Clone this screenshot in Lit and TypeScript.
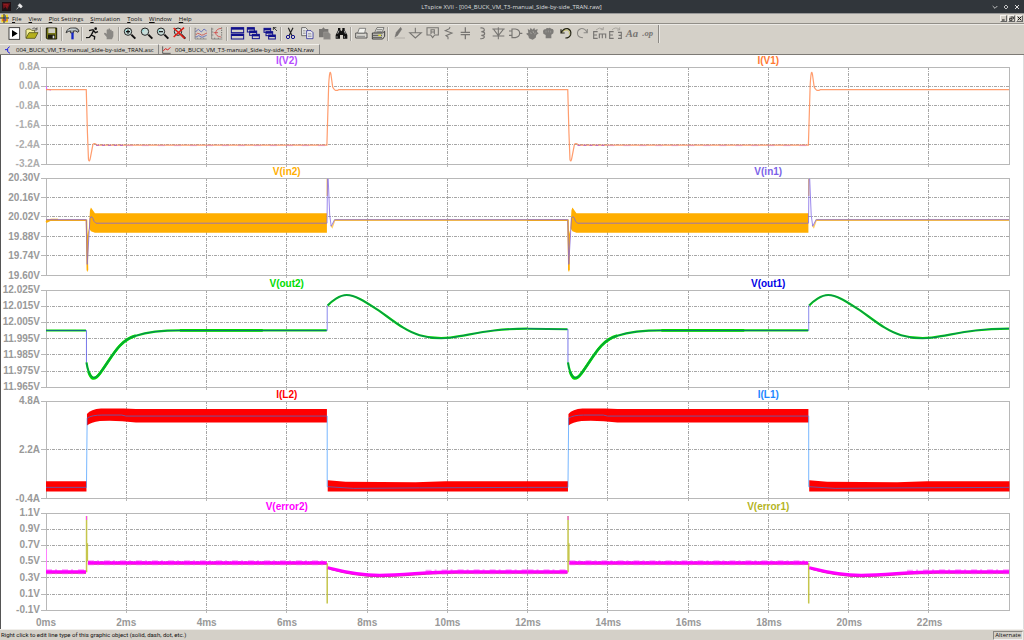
import { LitElement, html, svg, css } from "lit";
import { customElement, property } from "lit/decorators.js";

/* ---------- toolbar icons, drawn on a 45 x 45 grid ---------- */

const magnifier = (inner: unknown) => svg`
  <path d="M28 26 L40 38" stroke="#111" stroke-width="6"/>
  <circle cx="18" cy="17" r="11" fill="#c8dcd8" stroke="#222" stroke-width="3"/>
  <path d="M11 17a7 7 0 0 1 5-6" stroke="#7fe0e0" stroke-width="3" fill="none"/>
  ${inner}`;

const windowBox = (x: number, y: number, w: number, h: number) => svg`
  <rect x=${x} y=${y} width=${w} height=${h} fill="#d4d0c8" stroke="#10108c" stroke-width="3"/>
  <rect x=${x} y=${y} width=${w} height="6" fill="#10108c"/>`;

const handShape = svg`
  <path d="M14 40V33L6 24q0-5 5-3l3 3V12q3-5 5 0V9q3-4 5 0v3q3-3 5 0v4q4-3 5 1v14l-4 9z" fill="#8a8884"/>`;

const grey = "#777572";

const icons: Record<string, unknown> = {
  run: svg`<rect x="6" y="5" width="32" height="35" fill="#fff" stroke="#222" stroke-width="2.5"/>
    <path d="M15 12L32 22.5L15 33z" fill="#000"/>`,
  open: svg`<path d="M6 36V13l4-4h9l4 4h9v7" fill="#f4f09a" stroke="#55551c" stroke-width="2.5"/>
    <path d="M6 37L15 20H42L33 37z" fill="#b5b01c" stroke="#55551c" stroke-width="2.5"/>
    <path d="M25 8q6-5 11 1l3-4M39 5v7h-7" fill="none" stroke="#333" stroke-width="2"/>`,
  save: svg`<path d="M7 6H38V39H10L7 36z" fill="#77771a" stroke="#1c1c08" stroke-width="3"/>
    <rect x="13" y="7" width="20" height="14" fill="#cfcdc2"/>
    <rect x="12" y="26" width="21" height="12" fill="#1a1a10"/><rect x="26" y="29" width="5" height="8" fill="#ddd"/>`,
  hammer: svg`<path d="M3 20Q8 5 22 6H33q7 2 9 9l-3 4-7-4h-7v6H17v-6q-7 0-13 5z" fill="#a8b0b4" stroke="#222" stroke-width="2.5"/>
    <path d="M10 12Q17 8 32 10" stroke="#e8f4f4" stroke-width="2" fill="none"/>
    <path d="M19 20H26V40H19z" fill="#1526c8"/>`,
  runner: svg`<circle cx="32" cy="8" r="4" fill="#111"/>
    <path d="M12 14L24 11L31 20L39 17M26 13L19 27L29 32L28 41M19 27L13 34L3 35" stroke="#111" stroke-width="4" fill="none"/>`,
  hand: handShape,
  zoomIn: magnifier(svg`<path d="M12 17H24M18 11V23" stroke="#111" stroke-width="3.5"/>`),
  zoomArea: magnifier(""),
  zoomOut: magnifier(svg`<path d="M12 17H24" stroke="#111" stroke-width="3.5"/>`),
  zoomFit: magnifier(svg`<path d="M5 6L38 37M36 5L5 33" stroke="#e01c14" stroke-width="4.5"/>`),
  autoRange: svg`<path d="M6 5V39H41M6 8H10M6 16H10M6 24H10M6 32H10M14 39V35M23 39V35M32 39V35" stroke="#777" stroke-width="2" fill="none"/>
    <path d="M8 17L16 10L25 18L33 9L41 15" stroke="#4a58b8" stroke-width="2.2" fill="none"/>
    <path d="M8 27Q14 18 20 24T32 26T42 21" stroke="#c83838" stroke-width="2.2" fill="none"/>
    <path d="M8 34L17 29L27 34L41 28" stroke="#4a58b8" stroke-width="2.2" fill="none"/>`,
  plotAxes: svg`<path d="M8 5V39H40M8 9H13M8 18H13M8 27H13M17 39V35M28 39V35" stroke="#666" stroke-width="2" fill="none"/>
    <path d="M37 7Q22 8 20 20Q20 31 36 33M14 20H27" stroke="#cc3535" stroke-width="2.2" fill="none"/>
    <path d="M38 4V35" stroke="#444" stroke-width="2" stroke-dasharray="4 3"/>`,
  tile: svg`${windowBox(4, 5, 37, 15)}${windowBox(4, 24, 37, 15)}`,
  cascade: svg`${windowBox(4, 5, 21, 13)}${windowBox(11, 15, 21, 13)}${windowBox(19, 25, 21, 13)}`,
  closeAll: svg`${windowBox(3, 7, 20, 12)}${windowBox(9, 17, 20, 12)}${windowBox(17, 27, 20, 12)}
    <path d="M30 5H40M31 4L42 15M31 4V12" stroke="#222" stroke-width="2.4" fill="none"/>`,
  cut: svg`<path d="M16 5L27 29M30 5L18 29" stroke="#222" stroke-width="3.5"/>
    <circle cx="15" cy="33" r="5" fill="none" stroke="#15158c" stroke-width="3"/>
    <circle cx="30" cy="33" r="5" fill="none" stroke="#15158c" stroke-width="3"/>`,
  copy: svg`<path d="M5 5H17L22 10V29H5z" fill="#f4f4f4" stroke="#333" stroke-width="2"/>
    <path d="M9 13H17M9 18H17M9 23H17" stroke="#777" stroke-width="2"/>
    <path d="M20 14H33L39 20V38H20z" fill="#f8f8f8" stroke="#16168c" stroke-width="2.2"/>
    <path d="M24 22H34M24 27H35M24 32H35" stroke="#667" stroke-width="2"/>`,
  paste: svg`<path d="M6 9H15L19 4L24 9H34V34H6z" fill=${grey}/><path d="M20 18H33L40 24V40H20z" fill="#8a8884" stroke="#a5a39e" stroke-width="1.5"/>`,
  find: svg`<path d="M12 6H19V12L22 16L25 12V6H32V12L40 27V38H27V27H18V38H5V27L12 13z" fill="#111"/>
    <path d="M11 23L15 14M31 14L34 23M9 31V35M31 31V35" stroke="#eee" stroke-width="2.2"/>`,
  print: svg`<path d="M5 21H39V36H5z" fill="#d8d6d0" stroke="#444" stroke-width="2.5"/>
    <path d="M11 21L16 7H35L32 21z" fill="#f2f2ee" stroke="#555" stroke-width="2"/>
    <path d="M9 31H33" stroke="#888" stroke-width="3"/>`,
  printSetup: svg`<path d="M4 21H34L41 16V31L35 39H4z" fill="#c9c7c0" stroke="#333" stroke-width="2.8"/>
    <path d="M11 20L18 5H39L33 19z" fill="#f5f5f0" stroke="#444" stroke-width="2"/>
    <path d="M18 11H34M16 16H32" stroke="#444" stroke-width="2"/><path d="M6 28H33M6 34H33" stroke="#555" stroke-width="3"/>
    <rect x="22" y="26" width="8" height="4" fill="#dede20"/>`,
  wire: svg`<path d="M29 4L16 19L12 33L20 28L32 10z" fill=${grey} stroke=${grey} stroke-width="1.5"/><path d="M10 36H42" stroke="#a3a19c" stroke-width="2"/>`,
  ground: svg`<path d="M22 5V20M5 20H40L22 36z" fill="none" stroke=${grey} stroke-width="3.2"/>`,
  label: svg`<path d="M6 5H40V27H29L23 35L17 27H6z" fill="none" stroke=${grey} stroke-width="3.2"/>
    <path d="M18 24V11H28V24M18 18H28" fill="none" stroke=${grey} stroke-width="3.2"/>`,
  resistor: svg`<path d="M27 3L25 8L13 14L33 21L15 29L21 33V40" fill="none" stroke=${grey} stroke-width="3.2"/>`,
  capacitor: svg`<path d="M22 4V18M8 19H36M8 26H36M22 26V40" fill="none" stroke=${grey} stroke-width="3.8"/>`,
  inductor: svg`<path d="M16 6Q28 4 28 12Q28 17 19 17Q29 18 29 23Q29 28 19 28Q29 29 28 34Q26 39 16 38" fill="none" stroke=${grey} stroke-width="3.4"/>`,
  diode: svg`<path d="M4 9H41M22 4V40M8 10L22 29L37 10M5 30H40" fill="none" stroke=${grey} stroke-width="3.2"/>`,
  component: svg`<path d="M12 9H22Q35 11 35 22Q35 33 22 35H12zM3 15H12M3 28H12M35 22H43" fill="none" stroke=${grey} stroke-width="3.4"/>`,
  move: svg`<path d="M8 8l6 5 3-8 5 6 6-6 2 7 8-3-2 9 5 4-7 5-2 8-9 6-11-4-2-8-7-6 7-3z" fill="#7d7b78"/>
    <path d="M15 20l5 3m4-8l2 6m5-1l-2 5" stroke="#b5b3ae" stroke-width="2"/>`,
  drag: svg`<path d="M6 15q2-7 8-5q3-6 8-3q5-4 8 1q7-1 8 6l-1 8-6 4v11H14V27l-7-4z" fill="#7d7b78"/>
    <path d="M15 14v6m7-7v6m7-5v6" stroke="#a5a39e" stroke-width="2"/>`,
  undo: svg`<path d="M9 10V21H20M10 20Q17 6 29 8Q41 13 38 26Q34 36 22 36" fill="none" stroke="#262616" stroke-width="3.6"/>
    <path d="M14 18Q20 10 29 12Q37 17 34 26" fill="none" stroke="#b5b02c" stroke-width="1.8"/>`,
  redo: svg`<path d="M37 9V20H26M36 19Q29 6 17 8Q5 13 8 26Q12 35 24 35" fill="none" stroke="#8c8a86" stroke-width="3.2"/>`,
  rotate: svg`<path d="M17 17H5V37H17M5 27H15M22 37V24H41V37M31 24V37" fill="none" stroke=${grey} stroke-width="3.4"/>
    <path d="M12 12Q21 2 33 9M34 3V11H26" fill="none" stroke="#999792" stroke-width="2.2"/>`,
  mirror: svg`<path d="M17 17H5V37H17M5 27H15M30 19H40V37H30M32 28H40" fill="none" stroke=${grey} stroke-width="3.4"/>
    <path d="M12 12Q22 1 34 10M35 4V12H27" fill="none" stroke="#999792" stroke-width="2.2"/>`,
  text: svg`<text x="2" y="34" class="glyph big">Aa</text>`,
  directive: svg`<text x="1" y="31" class="glyph op">.op</text>`,
};

const toolGroups: [string, string][][] = [
  [["run", "Run"], ["open", "Open"]],
  [["save", "Save"]],
  [["hammer", "Control panel"]],
  [["runner", "Run simulation"], ["hand", "Halt"]],
  [["zoomIn", "Zoom in"], ["zoomArea", "Zoom area"], ["zoomOut", "Zoom out"], ["zoomFit", "Zoom full extents"]],
  [["autoRange", "Autorange"], ["plotAxes", "Plot axes"]],
  [["tile", "Tile windows"], ["cascade", "Cascade windows"], ["closeAll", "Close all"]],
  [["cut", "Cut"], ["copy", "Copy"], ["paste", "Paste"], ["find", "Find"]],
  [["print", "Print"], ["printSetup", "Print setup"]],
  [["wire", "Wire"], ["ground", "Ground"], ["label", "Label net"], ["resistor", "Resistor"], ["capacitor", "Capacitor"],
   ["inductor", "Inductor"], ["diode", "Diode"], ["component", "Component"], ["move", "Move"], ["drag", "Drag"],
   ["undo", "Undo"], ["redo", "Redo"], ["rotate", "Rotate"], ["mirror", "Mirror"], ["text", "Text"], ["directive", "SPICE directive"]],
];

/* ---------- waveform panes: 964 units across 24 ms, 97 units high ---------- */

interface Trace { color: string; width?: number; d: string; fill?: boolean; opacity?: number; dash?: string }
/* `first` is drawn in the first 12 ms only, `second` in the last 12 ms only, `traces` in both */
interface Pane { names: [string, string][]; ticks: string[]; light?: boolean; first?: Trace[]; second?: Trace[]; traces: Trace[] }

const outCurve = "C43 88 48 91 54 83C66 67 73 50 90 45.5C104 41 120 40.3 135 40.3H281";
const outRecovery = "C286 11 294 5 301 5C310 5 320 12 334 21C348 31 360 41 374 45C388 49 400 49 414 46C434 42.5 450 38.5 482 38.5";

const panes: Pane[] = [
  {
    names: [["I(V2)", "#b64dff"], ["I(V1)", "#ff7a33"]],
    ticks: ["0.8A", "0.0A", "-0.8A", "-1.6A", "-2.4A", "-3.2A"],
    light: true,
    first: [{ color: "#d070ff", d: "M0.5 19V22L5 23" }],
    traces: [
      { color: "#ff8c55", opacity: 0.85, width: 1.2, d: "M0 22.5H40.3L41.5 66L42.5 92Q43.5 96 44.5 90L47 77Q48.5 75 51 77.8H281.2L282 50L283 17Q284 1 285.2 7L287 20Q289 25 293 22.6H482" },
      { color: "#a050d0", d: "M50 78H80", dash: "3 3", opacity: 0.8 },
      { color: "#c060e8", d: "M80 78.3H281", dash: "7 9", opacity: 0.35 },
    ],
  },
  {
    names: [["V(in2)", "#ffae00"], ["V(in1)", "#7b62e8"]],
    ticks: ["20.30V", "20.16V", "20.02V", "19.88V", "19.74V", "19.60V"],
    first: [{ color: "#ffae00", width: 2, d: "M0 44L5 41.5H12" }],
    traces: [
      { color: "#ffae00", width: 1.6, d: "M0 42H40.5L41.5 92" },
      { color: "#ffae00", fill: true, d: "M40.5 60L41 93H41.8L43 50L45 53L49 54.5H281.2V35H49L45 29.5L44 32L43 50Z" },
      { color: "#ffae00", width: 1.4, opacity: 0.6, d: "M281.5 1V18M285 47L286.5 49L289 42H482" },
      { color: "#7b62e8", opacity: 0.75, d: "M0 41.3H40.3L41.3 86L44 40Q46 36 48 43L50 45H281.3L281.8 1H282.5L284 37L285.5 48L289 41.3H482" },
      { color: "#e0a040", opacity: 0.8, d: "M0 42.1H40M289 42H482" },
    ],
  },
  {
    names: [["V(out2)", "#00dc00"], ["V(out1)", "#0000e6"]],
    ticks: ["12.025V", "12.015V", "12.005V", "11.995V", "11.985V", "11.975V", "11.965V"],
    first: [
      { color: "#00d800", width: 2, d: "M0 40.3H40" },
      { color: "#2020dd", opacity: 0.6, d: "M0 40.3H40.5V72" },
    ],
    second: [
      { color: "#00d800", width: 2, d: "M0 38.5L40 39.2" },
      { color: "#2020dd", opacity: 0.6, d: "M0 38.5L40.5 39.2V72" },
    ],
    traces: [
      { color: "#00d800", width: 2.8, d: "M134 40.3H217M42.5 81C45 89 48 91 54 83C66 67 73 50 90 45.5" },
      { color: "#00d800", width: 2.2, d: `M40.5 72${outCurve}M282 15.5${outRecovery}` },
      { color: "#1818dd", opacity: 0.5, d: `M40.5 72${outCurve}.5V15.5${outRecovery}` },
    ],
  },
  {
    names: [["I(L2)", "#ff0000"], ["I(L1)", "#1e88ff"]],
    ticks: ["4.8A", "2.2A", "-0.4A"],
    traces: [
      { color: "#ff0000", fill: true, d: "M0 80H40.5V90H0z" },
      { color: "#ff0000", fill: true, d: "M41 13Q45 8 55 7.5H78L90 8H281.2V21.5H90Q70 19 54 20Q45 21 41 24.5z" },
      { color: "#ff0000", fill: true, d: "M282 79L300 80.5L370 81L400 80H482.5V90H282z" },
      { color: "#1e88ff", opacity: 0.6, d: "M0 86H40.5L41.2 17Q46 14 56 14H76L80 15H281.5V85.3L308 87L374 86.5L482 86" },
    ],
  },
  {
    names: [["V(error2)", "#ff00ff"], ["V(error1)", "#b4b41e"]],
    ticks: ["1.1V", "0.9V", "0.7V", "0.5V", "0.3V", "0.1V", "-0.1V"],
    first: [{ color: "#ff80ff", d: "M0.5 36V60" }],
    traces: [
      { color: "#b8b820", width: 1.5, opacity: 0.8, d: "M40.6 59V3M41.4 30V48M281.5 50V90" },
      { color: "#ff40ff", d: "M40.6 7V3" },
      { color: "#d02890", width: 2, d: "M0 59.5H40M42 50.5H281M284 55.5C300 60 318 63 334 63C360 63 380 59.5 410 59.5H482" },
      { color: "#ff50ff", width: 5, dash: "6 3 2 5", opacity: 0.6, d: "M0 58.5H40M42 49.5H281M380 59L410 58.5H482" },
      { color: "#ff00ff", width: 3, d: "M0 58.5H40M42 49.5H281M282 54.5C300 59 318 62 334 62C360 62 380 58.5 410 58.5H482" },
    ],
  },
];

const timeTicks = Array.from({ length: 12 }, (_, i) => `${i * 2}ms`);

@customElement("wave-pane")
class WavePane extends LitElement {
  @property({ attribute: false }) pane!: Pane;

  static styles = css`
    :host { display: grid; grid-template-columns: 46px minmax(0, 1fr) 14px; grid-template-rows: 12px minmax(0, 1fr); padding-bottom: 2px; min-height: 0; }
    .names { grid-column: 2; display: flex; justify-content: space-around; font-size: 10px; line-height: 12px; font-weight: bold; }
    .names span { width: 80px; text-align: center; }
    .ticks { grid-column: 1; grid-row: 2; display: flex; flex-direction: column; justify-content: space-between; margin: -6px 6px -6px 0; align-items: flex-end; white-space: nowrap; font-size: 10px; line-height: 12px; font-weight: bold; color: #999; }
    .light { color: #adadad; }
    svg { grid-column: 2; grid-row: 2; display: block; width: 100%; height: 100%; overflow: visible; }
    path { vector-effect: non-scaling-stroke; }
    .frame { fill: none; stroke: #b8b8b8; shape-rendering: crispEdges; }
    .grid { fill: none; stroke: #a6a6a6; stroke-dasharray: 3 1 1 1; shape-rendering: crispEdges; }
  `;

  private draw(t: Trace) {
    return t.fill
      ? svg`<path d=${t.d} fill=${t.color} />`
      : svg`<path d=${t.d} fill="none" stroke=${t.color} stroke-width=${t.width ?? 1} opacity=${t.opacity ?? 1} stroke-dasharray=${t.dash ?? "none"} />`;
  }

  render() {
    const { names, ticks, light, first = [], second = [], traces } = this.pane;
    const n = ticks.length - 1;
    const rows = ticks.map((_, i) => (i * 97) / n);
    const cols = Array.from({ length: 11 }, (_, i) => ((i + 1) * 964) / 12);
    return html`
      <div class="names">${names.map(([name, color]) => html`<span style="color:${color}">${name}</span>`)}</div>
      <div class="ticks ${light ? "light" : ""}">${ticks.map((t) => html`<span>${t}</span>`)}</div>
      <svg viewBox="0 0 964 97" preserveAspectRatio="none" aria-hidden="true">
        <path class="grid" d=${rows.slice(1, -1).map((y) => `M0 ${y}H964`).join("") + cols.map((x) => `M${x} 0V97`).join("")} />
        <path class="frame" d=${"M0 0H964V97H0z" + rows.map((y) => `M-5 ${y}H0`).join("") + cols.map((x) => `M${x} 97v3`).join("")} />
        <g>${[...first, ...traces].map((t) => this.draw(t))}</g>
        <g transform="translate(482 0)">${[...second, ...traces].map((t) => this.draw(t))}</g>
      </svg>`;
  }
}

@customElement("app-root")
class AppRoot extends LitElement {
  static styles = css`
    :host { display: flex; flex-direction: column; height: 100vh; overflow: hidden; background: #d4d0c8; color: #111; font-family: "Open Sans", "Noto Sans", sans-serif; font-size: 6px; line-height: 8px; }
    button { font: inherit; color: inherit; background: none; border: 0; padding: 0; margin: 0; }
    svg { display: block; }
    .title { display: grid; grid-template-columns: 1fr auto 1fr; align-items: center; height: 13px; background: #31363b; color: #dcdedf; padding: 0 3px 0 2px; }
    .title h1 { margin: 0; font-size: 6px; font-weight: normal; }
    .left { display: flex; gap: 5px; align-items: center; }
    .controls { display: flex; justify-content: flex-end; gap: 3px; }
    .menubar { display: flex; align-items: center; height: 9px; border-top: 1px solid #999; border-bottom: 1px solid #918e88; }
    .menubar nav { display: flex; flex: 1; gap: 7px; padding-left: 3px; }
    .menubar nav button::first-letter { text-decoration: underline; }
    .mdi { display: flex; gap: 1px; padding-right: 1px; }
    .mdi button { width: 7px; height: 7px; background: #d4d0c8; border: 1px solid; border-color: #f4f2ee #666 #666 #f4f2ee; }
    .toolbar { display: flex; justify-content: space-between; align-items: center; height: 19px; width: 65%; min-width: 640px; box-sizing: border-box; padding: 0 5px 0 7px; }
    .strip { box-shadow: inset 0 1px #eceae6; }
    .toolbar button { width: 15px; height: 15px; }
    .sep { width: 1px; height: 14px; background: #a5a29c; border-right: 1px solid #e8e6e2; }
    .sep:last-child { height: 18px; background: #8c8984; }
    .glyph { fill: #777572; font-family: "Liberation Serif", serif; font-style: italic; font-weight: bold; }
    .big { font-size: 32px; }
    .op { font-size: 26px; }
    .tabs { display: flex; height: 10px; border-bottom: 1px solid #7d7a75; padding-top: 1px; }
    .tabs button { display: flex; align-items: center; gap: 4px; height: 10px; border-right: 1px solid #888; border-top: 1px solid #f0eeea; }
    .tab-asc { width: 159px; padding-left: 5px; }
    .tab-raw { width: 161px; padding-left: 3px; }
    .plots { flex: 1; min-height: 0; display: flex; flex-direction: column; background: #fff; border-left: 1px solid #555; border-right: 1px solid #ddd; box-sizing: border-box; font-family: "Liberation Sans", Arial, sans-serif; }
    wave-pane { flex: 1; margin: 0 0 0 -1px; }
    .time { display: grid; grid-template-columns: repeat(12, minmax(0, 1fr)); height: 17px; margin: 0 13px 0 45px; font-size: 10px; line-height: 22px; font-weight: bold; color: #999; }
    .time span { justify-self: start; width: 40px; margin-left: -20px; text-align: center; }
    .status { display: flex; justify-content: space-between; align-items: center; height: 10px; border-top: 1px solid #f0eeea; padding-left: 1px; }
    .hint { font-family: Roboto, "Liberation Sans", sans-serif; }
    .mode { border: 1px solid #8a8782; border-right-color: #eee; border-bottom-color: #eee; padding: 0 1px; line-height: 7px; margin-right: 1px; }
  `;

  render() {
    const menus = ["File", "View", "Plot Settings", "Simulation", "Tools", "Window", "Help"];
    return html`
      <header class="title">
        <div class="left">
          <svg width="9" height="9" viewBox="0 0 27 27" aria-hidden="true">
            <rect width="27" height="27" fill="#1d1114" />
            <path d="M2 4H25L15 24L12 14L4 20z" fill="#6e1219" /><path d="M5 8H17L13 17" fill="none" stroke="#a22" stroke-width="2" />
          </svg>
          <svg width="7" height="7" viewBox="0 0 21 21" aria-hidden="true">
            <path d="M11 2L19 9L15 15L6 8zM8 12L2 19" fill="#eee" stroke="#eee" stroke-width="2" />
          </svg>
        </div>
        <h1>LTspice XVII - [004_BUCK_VM_T3-manual_Side-by-side_TRAN.raw]</h1>
        <div class="controls">
          <button aria-label="Minimize"><svg width="8" height="8" viewBox="0 0 24 24"><path d="M5 9L12 16L19 9" fill="none" stroke="#ddd" stroke-width="2.5" /></svg></button>
          <button aria-label="Maximize"><svg width="8" height="8" viewBox="0 0 24 24"><path d="M12 6L18 12L12 18L6 12z" fill="none" stroke="#ddd" stroke-width="2.5" /></svg></button>
          <button aria-label="Close"><svg width="8" height="8" viewBox="0 0 24 24"><path d="M6 6L18 18M18 6L6 18" fill="none" stroke="#ddd" stroke-width="3" /></svg></button>
        </div>
      </header>
      <div class="menubar">
        <svg width="9" height="9" viewBox="0 0 27 27" aria-hidden="true">
          <rect x="4" y="2" width="20" height="23" fill="#f4d820" /><path d="M0 12H27M12 0V27" stroke="#224" stroke-width="3" />
          <path d="M6 18H23" stroke="#d22" stroke-width="3" /><path d="M16 4V22" stroke="#35b" stroke-width="3" />
        </svg>
        <nav>${menus.map((m) => html`<button>${m}</button>`)}</nav>
        <div class="mdi">
          <button aria-label="Minimize pane"><svg width="5" height="5" viewBox="0 0 15 15"><path d="M3 12H11" stroke="#111" stroke-width="3" /></svg></button>
          <button aria-label="Restore pane"><svg width="5" height="5" viewBox="0 0 15 15"><path d="M5 3H13V9M2 7H9V13H2z" fill="none" stroke="#111" stroke-width="2.4" /></svg></button>
          <button aria-label="Close pane"><svg width="5" height="5" viewBox="0 0 15 15"><path d="M2 2L13 13M13 2L2 13" stroke="#111" stroke-width="3" /></svg></button>
        </div>
      </div>
      <div class="strip"><div class="toolbar" role="toolbar" aria-label="Main toolbar">
        ${toolGroups.map((group) => html`${group.map(([id, label]) => html`
          <button aria-label=${label}><svg width="15" height="15" viewBox="0 0 45 45" fill="none">${icons[id]}</svg></button>`)}
          <span class="sep"></span>`)}
      </div></div>
      <div class="tabs">
        <button class="tab-asc">
          <svg width="7" height="8" viewBox="0 0 21 24" aria-hidden="true"><path d="M14 2L8 7V17L15 22M0 11H8" fill="none" stroke="#2222e0" stroke-width="3" /></svg>
          004_BUCK_VM_T3-manual_Side-by-side_TRAN.asc
        </button>
        <button class="tab-raw">
          <svg width="9" height="8" viewBox="0 0 27 24" aria-hidden="true"><path d="M2 1V22H26" fill="none" stroke="#444" stroke-width="2.5" /><path d="M4 14L11 8L17 12L25 4" fill="none" stroke="#e01818" stroke-width="3" /></svg>
          004_BUCK_VM_T3-manual_Side-by-side_TRAN.raw
        </button>
      </div>
      <main class="plots">
        ${panes.map((p) => html`<wave-pane .pane=${p}></wave-pane>`)}
        <div class="time">${timeTicks.map((t) => html`<span>${t}</span>`)}</div>
      </main>
      <footer class="status">
        <span class="hint">Right click to edit line type of this graphic object (solid, dash, dot, etc.)</span>
        <span class="mode">Alternate</span>
      </footer>`;
  }
}
